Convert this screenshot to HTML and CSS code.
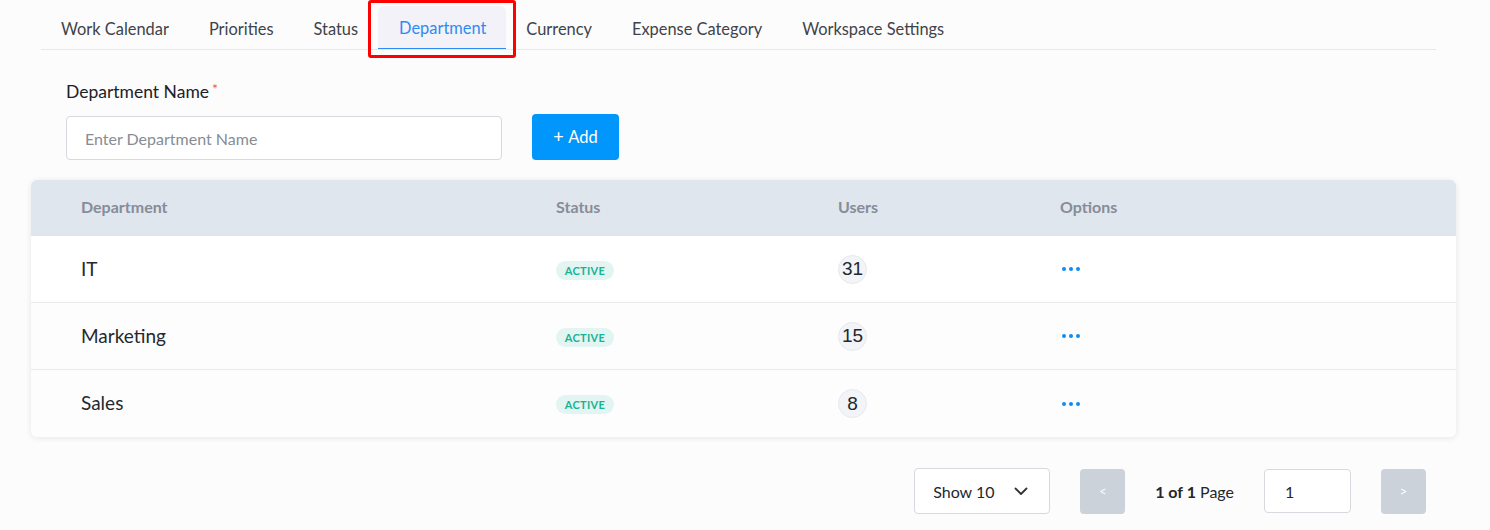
FILE: index.html
```html
<!DOCTYPE html>
<html lang="en">
<head>
<meta charset="utf-8">
<title>Department</title>
<link rel="stylesheet" href="styles.css">
</head>
<body>
<div class="page">
  <nav class="tabs">
    <a class="tab">Work Calendar</a>
    <a class="tab">Priorities</a>
    <a class="tab">Status</a>
    <a class="tab active">Department<span class="highlight"></span></a>
    <a class="tab">Currency</a>
    <a class="tab">Expense Category</a>
    <a class="tab">Workspace Settings</a>
  </nav>

  <section class="form">
    <label class="label">Department Name<span class="req">*</span></label>
    <div class="form-row">
      <input class="input" type="text" placeholder="Enter Department Name">
      <button class="btn-add"><span class="plus">+</span> Add</button>
    </div>
  </section>

  <section class="card">
    <div class="grid head">
      <div>Department</div>
      <div>Status</div>
      <div>Users</div>
      <div>Options</div>
    </div>
    <div class="grid row first">
      <div class="name">IT</div>
      <div><span class="badge">ACTIVE</span></div>
      <div><span class="count">31</span></div>
      <div class="opt"><span class="dots"><i></i><i></i><i></i></span></div>
    </div>
    <div class="grid row">
      <div class="name">Marketing</div>
      <div><span class="badge">ACTIVE</span></div>
      <div><span class="count">15</span></div>
      <div class="opt"><span class="dots"><i></i><i></i><i></i></span></div>
    </div>
    <div class="grid row last">
      <div class="name">Sales</div>
      <div><span class="badge">ACTIVE</span></div>
      <div><span class="count">8</span></div>
      <div class="opt"><span class="dots"><i></i><i></i><i></i></span></div>
    </div>
  </section>

  <footer class="pager">
    <div class="select">
      <span>Show 10</span>
      <svg width="14" height="9" viewBox="0 0 14 9"><path d="M1.5 1.5 L7 7 L12.5 1.5" fill="none" stroke="#333" stroke-width="1.8" stroke-linecap="round" stroke-linejoin="round"/></svg>
    </div>
    <button class="pg-btn">&lt;</button>
    <div class="pg-text"><b>1 of 1</b> Page</div>
    <input class="pg-input" type="text" value="1">
    <button class="pg-btn">&gt;</button>
  </footer>
</div>
</body>
</html>
```

FILE: styles.css
```css
* { box-sizing: border-box; }
html, body { margin: 0; padding: 0; }
body {
  background: #fcfcfc;
  font-family: Lato, "Open Sans", "Liberation Sans", sans-serif;
  color: #23272e;
  width: 1490px;
  height: 530px;
  overflow: hidden;
}
.page { padding-top: 6px; }

.tabs {
  display: flex;
  margin: 0 54px 0 41px;
  border-bottom: 1px solid #e8e9ec;
  height: 44px;
}
.tab {
  position: relative;
  display: flex;
  align-items: center;
  padding: 1px 20px 0;
  font-size: 16.4px;
  color: #3f434a;
  height: 43px;
}
.tab.active {
  background: #f2f2f8;
  color: #2d8cf0;
  border-radius: 6px 6px 0 0;
  border-bottom: 1px solid #2d8cf0;
  padding-left: 21px;
}
.highlight {
  position: absolute;
  left: -10px;
  top: -6px;
  width: 148px;
  height: 58px;
  border: 3px solid #f00;
  border-radius: 3px;
}

.form { padding: 29px 0 0 66px; }
.label {
  display: block;
  font-size: 17.5px;
  color: #1d2127;
  line-height: 20px;
}
.req { color: #f05454; font-size: 14px; margin-left: 3px; vertical-align: 4px; }
.form-row {
  display: flex;
  align-items: flex-end;
  gap: 30px;
  margin-top: 12px;
}
.input {
  width: 436px;
  height: 44px;
  border: 1px solid #d6d9de;
  border-radius: 4px;
  background: #fff;
  padding: 0 18px;
  font-family: inherit;
  font-size: 16px;
  color: #333;
  outline: none;
}
.input::placeholder { color: #878c95; }
.btn-add {
  width: 87px;
  height: 46px;
  border: none;
  border-radius: 4px;
  background: #0096fb;
  color: #fff;
  font-family: inherit;
  font-size: 16.5px;
  padding: 0 0 2px;
}
.plus { font-size: 18px; margin-right: 1px; }

.card {
  margin: 20px 34px 0 31px;
  background: #fff;
  border-radius: 6px;
  box-shadow: 0 1px 6px rgba(0,0,0,0.09);
  overflow: hidden;
}
.grid {
  display: grid;
  grid-template-columns: 475px 282px 222px 1fr;
  align-items: center;
  padding-left: 50px;
}
.head {
  height: 56px;
  background: #dfe6ed;
  color: #878c99;
  font-weight: 700;
  font-size: 16px;
  border-bottom: 1px solid #e3e5e8;
  padding-bottom: 2px;
}
.row {
  height: 67px;
  border-bottom: 1px solid #eaeaea;
  background: #fdfdfd;
}
.row.first { background: #fff; }
.row.last { border-bottom: none; height: 67px; }
.name { font-size: 19px; color: #25282e; padding-bottom: 2px; }
.badge {
  display: inline-block;
  width: 58px;
  height: 19px;
  line-height: 19px;
  text-align: center;
  border-radius: 10px;
  background: #e3f5f2;
  color: #19b394;
  font-size: 11px;
  font-weight: 700;
  letter-spacing: 0.3px;
}
.count {
  display: inline-flex;
  align-items: center;
  justify-content: center;
  width: 29px;
  height: 29px;
  border-radius: 50%;
  background: #f2f4f7;
  border: 1px solid #e6e9ed;
  font-family: "Liberation Sans", Arial, sans-serif;
  font-size: 19px;
  color: #23272e;
}
.opt { display: flex; align-items: center; }
.dots { display: flex; gap: 3px; margin-left: 2px; }
.dots i {
  display: block;
  width: 4px;
  height: 4px;
  border-radius: 50%;
  background: #0b8cf7;
}

.pager {
  display: flex;
  justify-content: flex-end;
  align-items: center;
  gap: 30px;
  margin: 31px 64px 0 0;
}
.select {
  width: 136px;
  height: 46px;
  border: 1px solid #d6d9de;
  border-radius: 4px;
  background: #fff;
  display: flex;
  align-items: center;
  justify-content: space-between;
  padding: 0 21px 0 18px;
  font-size: 16px;
  color: #23272e;
}
.pg-btn {
  width: 45px;
  height: 45px;
  border: none;
  border-radius: 4px;
  background: #cbd2d9;
  color: #fff;
  font-family: inherit;
  font-size: 13px;
}
.pg-text { font-size: 16px; color: #23272e; }
.pg-text b { font-weight: 700; }
.pg-input {
  width: 87px;
  height: 44px;
  border: 1px solid #d6d9de;
  border-radius: 4px;
  background: #fff;
  padding: 0 20px;
  font-family: inherit;
  font-size: 16px;
  color: #23272e;
  outline: none;
}
```
